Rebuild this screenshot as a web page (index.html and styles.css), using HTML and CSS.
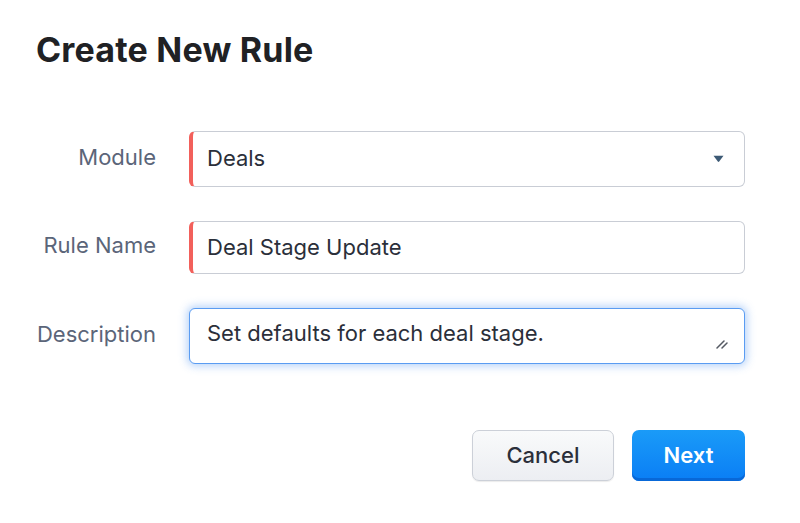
FILE: index.html
```html
<!DOCTYPE html>
<html lang="en">
<head>
<meta charset="utf-8">
<title>Create New Rule</title>
<link rel="stylesheet" href="styles.css">
</head>
<body>
<div class="dialog">
  <h1 class="title">Create New Rule</h1>
  <div class="form">
    <label class="label">Module</label>
    <div class="field field-required field-select">
      <span class="value">Deals</span>
      <svg class="caret" width="11" height="8" viewBox="0 0 11 8"><path d="M0.5 0.8 H10.5 L6.2 6.6 Q5.5 7.5 4.8 6.6 Z" fill="#3d5a75"/></svg>
    </div>
    <label class="label">Rule Name</label>
    <div class="field field-required field-short">
      <span class="value">Deal Stage Update</span>
    </div>
    <label class="label">Description</label>
    <div class="field field-focus">
      <span class="value">Set defaults for each deal stage.</span>
      <svg class="resize" width="12" height="10" viewBox="0 0 12 10"><path d="M1 9 L8 2 M6 9 L11 4" stroke="#555a63" stroke-width="1.5" stroke-linecap="round"/></svg>
    </div>
  </div>
  <div class="actions">
    <button class="btn btn-cancel">Cancel</button>
    <button class="btn btn-next">Next</button>
  </div>
</div>
</body>
</html>
```

FILE: styles.css
```css
* { box-sizing: border-box; }
html, body {
  margin: 0;
  padding: 0;
  background: #ffffff;
  font-family: Inter, "Noto Sans", "Liberation Sans", sans-serif;
}
.dialog {
  width: 800px;
  height: 523px;
  padding: 30px 55px 0 36px;
}
.title {
  margin: 0;
  font-size: 34px;
  line-height: 40px;
  font-weight: 700;
  color: #202124;
  letter-spacing: 0.2px;
}
.form {
  margin-top: 61px;
  display: grid;
  grid-template-columns: 120px 1fr;
  column-gap: 33px;
  row-gap: 34px;
  align-items: center;
}
.label {
  text-align: right;
  font-size: 22px;
  color: #5b6579;
  margin-top: -5px;
  white-space: nowrap;
}
.field {
  position: relative;
  height: 56px;
  border: 1px solid #c9cdd5;
  border-radius: 6px;
  display: flex;
  align-items: center;
  padding: 0 16px 0 17px;
  background: #fff;
}
.field-short { height: 53px; }
.field-required {
  border-left: 4px solid #f2605b;
  padding-left: 14px;
}
.value {
  font-size: 22px;
  color: #2b2f3a;
  flex: 1;
  margin-top: -2px;
}
.caret { margin-right: 4px; }
.field-focus {
  border: 1.5px solid #5a9cf2;
  box-shadow: 0 0 8px 2px rgba(90, 156, 242, 0.45);
  align-items: flex-start;
  padding-top: 13px;
}
.resize {
  position: absolute;
  right: 16px;
  bottom: 14px;
}
.actions {
  margin-top: 66px;
  display: flex;
  justify-content: flex-end;
  gap: 18px;
}
.btn {
  height: 51px;
  border-radius: 7px;
  font-family: Inter, "Noto Sans", "Liberation Sans", sans-serif;
  font-size: 22px;
  cursor: pointer;
  padding: 0 0 2px 0;
}
.btn-cancel {
  width: 142px;
  border: 1px solid #ccd0d8;
  background: linear-gradient(#f9fafb, #eceef2);
  color: #2b2f3a;
  font-weight: 500;
  box-shadow: 0 1px 1px rgba(0,0,0,0.08);
}
.btn-next {
  width: 113px;
  border: none;
  background: linear-gradient(#1a9bf8, #0a7ef5);
  color: #ffffff;
  font-weight: 600;
  box-shadow: inset 0 -3px 0 #0868d8;
}
```
